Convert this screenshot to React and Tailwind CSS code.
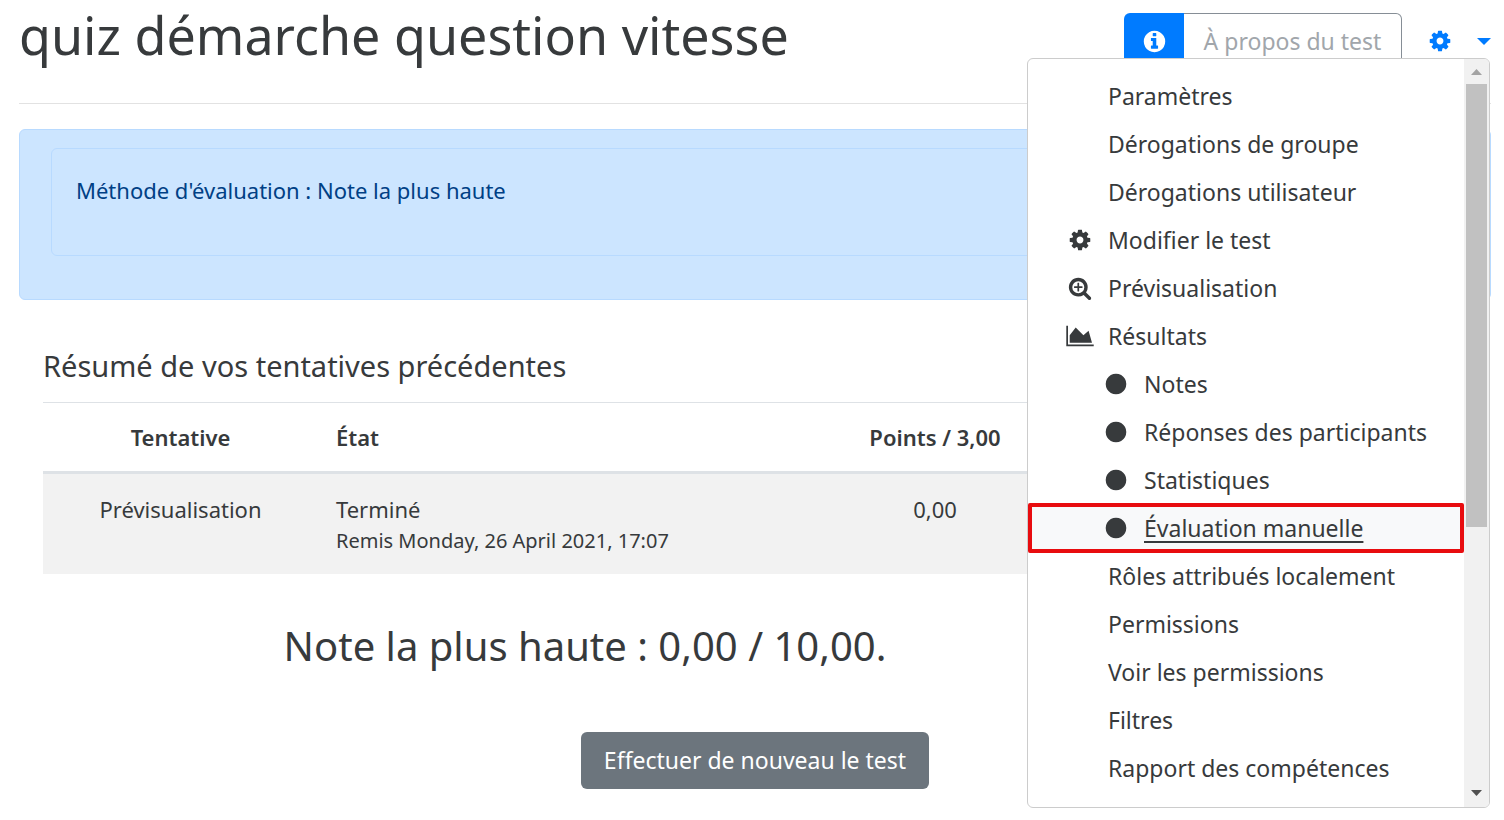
const PATHS = {
  cog: ["0 0 1792 1792", "M1152 896q0-106-75-181t-181-75-181 75-75 181 75 181 181 75 181-75 75-181zm512-109v222q0 12-8 23t-20 13l-185 28q-19 54-39 91 35 50 107 138 10 12 10 25t-9 23q-27 37-99 108t-94 71q-12 0-26-9l-138-108q-44 23-91 38-16 136-29 186-7 28-36 28h-222q-14 0-24.5-8.5t-11.5-21.5l-28-184q-49-16-90-37l-141 107q-10 9-25 9-14 0-25-11-126-114-165-168-7-10-7-23 0-12 8-23 15-21 51-66.5t54-70.5q-27-50-41-99l-183-27q-13-2-21-12.5t-8-23.5v-222q0-12 8-23t19-13l186-28q14-46 39-92-40-57-107-138-10-12-10-24 0-10 9-23 26-36 98.5-107.5t94.5-71.5q13 0 26 10l138 107q44-23 91-38 16-136 29-186 7-28 36-28h222q14 0 24.5 8.5t11.5 21.5l28 184q49 16 90 37l142-107q9-9 24-9 13 0 25 10 129 119 165 170 7 8 7 22 0 12-8 23-15 21-51 66.5t-54 70.5q26 50 41 98l183 28q13 2 21 12.5t8 23.5z"],
  info: ["0 0 1792 1792", "M1152 1376v-160q0-14-9-23t-23-9h-96v-512q0-14-9-23t-23-9h-320q-14 0-23 9t-9 23v160q0 14 9 23t23 9h96v320h-96q-14 0-23 9t-9 23v160q0 14 9 23t23 9h448q14 0 23-9t9-23zm-128-896v-160q0-14-9-23t-23-9h-192q-14 0-23 9t-9 23v160q0 14 9 23t23 9h192q14 0 23-9t9-23zm640 416q0 209-103 385.5t-279.5 279.5-385.5 103-385.5-103-279.5-279.5-103-385.5 103-385.5 279.5-279.5 385.5-103 385.5 103 279.5 279.5 103 385.5z"],
  zoom: ["0 0 1792 1792", "M1088 800v64q0 13-9.5 22.5t-22.5 9.5h-224v224q0 13-9.5 22.5t-22.5 9.5h-64q-13 0-22.5-9.5t-9.5-22.5v-224h-224q-13 0-22.5-9.5t-9.5-22.5v-64q0-13 9.5-22.5t22.5-9.5h224v-224q0-13 9.5-22.5t22.5-9.5h64q13 0 22.5 9.5t9.5 22.5v224h224q13 0 22.5 9.5t9.5 22.5zm128 32q0-185-131.5-316.5t-316.5-131.5-316.5 131.5-131.5 316.5 131.5 316.5 316.5 131.5 316.5-131.5 131.5-316.5zm512 832q0 53-37.5 90.5t-90.5 37.5q-54 0-90-38l-343-342q-179 124-399 124-143 0-273.5-55.5t-225-150-150-225-55.5-273.5 55.5-273.5 150-225 225-150 273.5-55.5 273.5 55.5 225 150 150 225 55.5 273.5q0 220-124 399l343 343q37 37 37 90z"],
  chart: ["0 0 2048 1792", "M2048 1536v128h-2048v-1536h128v1408h1920zm-384-1024l256 896h-1664v-576l448-576 576 576z"],
  circle: ["0 0 1792 1792", "M1664 896q0 209-103 385.5t-279.5 279.5-385.5 103-385.5-103-279.5-279.5-103-385.5 103-385.5 279.5-279.5 385.5-103 385.5 103 279.5 279.5 103 385.5z"],
};

function Icon({ name, className }) {
  const [viewBox, d] = PATHS[name];
  return (
    <svg viewBox={viewBox} className={className} fill="currentColor" aria-hidden="true">
      <path d={d} />
    </svg>
  );
}

const ITEMS = [
  { label: "Paramètres" },
  { label: "Dérogations de groupe" },
  { label: "Dérogations utilisateur" },
  { label: "Modifier le test", icon: "cog" },
  { label: "Prévisualisation", icon: "zoom" },
  { label: "Résultats", icon: "chart" },
  { label: "Notes", sub: true },
  { label: "Réponses des participants", sub: true },
  { label: "Statistiques", sub: true },
  { label: "Évaluation manuelle", sub: true, active: true },
  { label: "Rôles attribués localement" },
  { label: "Permissions" },
  { label: "Voir les permissions" },
  { label: "Filtres" },
  { label: "Rapport des compétences" },
];

function MenuItem({ label, icon, sub, active }) {
  return (
    <li>
      <a
        href="#"
        className={
          active
            ? "-my-px flex h-[50px] items-center rounded-xs border-4 border-[#e80c0f] bg-[#f8f9fa] pl-[68px] underline decoration-2 underline-offset-4"
            : sub
              ? "flex h-12 items-center pl-[72px]"
              : "flex h-12 items-center pl-9"
        }
      >
        <span className={sub ? "flex w-11 shrink-0 pl-1" : "flex w-11 shrink-0 pl-px"}>
          {sub && <Icon name="circle" className="h-6 w-6" />}
          {icon && (
            <span className="flex w-[30px] justify-center">
              <Icon name={icon} className={icon === "chart" ? "h-6 w-7" : "h-6 w-6"} />
            </span>
          )}
        </span>
        <span className="whitespace-nowrap">{label}</span>
      </a>
    </li>
  );
}

function ActionsMenu() {
  return (
    <nav
      aria-label="Actions du test"
      className="absolute top-[58px] right-[14px] flex h-[750px] w-[463px] overflow-hidden rounded-md border border-[#cccccc] bg-white text-[23px]"
    >
      <ul className="min-w-0 flex-1 pt-[13px]">
        {ITEMS.map((item) => (
          <MenuItem key={item.label} {...item} />
        ))}
      </ul>
      <div className="flex w-[25px] shrink-0 flex-col items-center bg-[#f1f1f1]" aria-hidden="true">
        <svg viewBox="0 0 25 25" className="h-[25px] w-[25px] shrink-0">
          <path d="M7 16h11l-5.500-6z" fill="#a3a3a3" />
        </svg>
        <div className="h-[443px] w-[21px] shrink-0 bg-[#c1c1c1]" />
        <div className="flex-1" />
        <svg viewBox="0 0 25 25" className="h-[25px] w-[25px] shrink-0">
          <path d="M7 8h11l-5.500 6z" fill="#505050" />
        </svg>
      </div>
    </nav>
  );
}

export default function App() {
  return (
    <div className="relative min-h-[820px] bg-white pr-[13px] pl-[19px] font-['Noto_Sans',sans-serif] text-[#373a3c]">
      <header className="flex h-[104px] items-start justify-between border-b border-[#e2e2e2]">
        <h1 className="pt-[3px] text-[52px] leading-[64px] whitespace-nowrap">quiz démarche question vitesse</h1>
        <div className="flex items-start pt-[13px]">
          <div className="flex h-14">
            <button type="button" aria-label="Informations" className="flex w-[60px] items-center justify-center rounded-l-md bg-[#007bff] text-white">
              <Icon name="info" className="h-[25px] w-[25px]" />
            </button>
            <button type="button" className="w-[218px] rounded-r-md border border-l-0 border-[#868e96] text-[23px] whitespace-nowrap text-[#a1a6ab]">
              À propos du test
            </button>
          </div>
          <button type="button" aria-label="Menu d'actions" className="ml-[26px] flex h-14 items-center gap-[25px] text-[#007bff]">
            <Icon name="cog" className="h-6 w-6" />
            <svg viewBox="0 0 14 7" className="h-[7px] w-[14px]" fill="currentColor" aria-hidden="true">
              <path d="M0 0h14l-7 7z" />
            </svg>
          </button>
        </div>
      </header>

      <section className="mt-[25px] h-[171px] rounded-md border border-[#b8daff] bg-[#cce5ff] px-[31px] pt-[18px] text-[#004085]">
        <div className="h-[108px] rounded-md border border-[#b8daff] px-6 pt-[23px] text-[22px] leading-9">
          Méthode d'évaluation : Note la plus haute
        </div>
      </section>

      <main className="px-6">
        <h2 className="pt-[44px] pb-[14px] text-[29px] leading-[44px]">Résumé de vos tentatives précédentes</h2>
        <table className="w-full table-fixed text-[22px] leading-9">
          <colgroup>
            <col className="w-[275px]" />
            <col className="w-[535px]" />
            <col className="w-[164px]" />
            <col />
          </colgroup>
          <thead>
            <tr className="border-t border-b-3 border-t-[#dee2e6] border-b-[#dee2e6]">
              <th scope="col" className="px-[18px] py-4 text-center font-semibold">Tentative</th>
              <th scope="col" className="px-[18px] py-4 text-left font-semibold">État</th>
              <th scope="col" className="py-4 text-center font-semibold whitespace-nowrap">Points / 3,00</th>
              <td />
            </tr>
          </thead>
          <tbody>
            <tr className="bg-[#f2f2f2] align-top">
              <td className="px-[18px] py-[17px] text-center">Prévisualisation</td>
              <td className="px-[18px] pt-[17px] pb-[19px]">
                Terminé
                <span className="block text-[20px] leading-[28px]">Remis Monday, 26 April 2021, 17:07</span>
              </td>
              <td className="py-[17px] text-center">0,00</td>
              <td />
            </tr>
          </tbody>
        </table>
        <h3 className="mt-[42px] pr-[340px] text-center text-[40px] leading-[60px]">Note la plus haute : 0,00 / 10,00.</h3>
        <div className="mt-14 flex justify-center">
          <button type="button" className="h-[57px] w-[348px] rounded-md bg-[#6c757d] text-[23px] whitespace-nowrap text-white">
            Effectuer de nouveau le test
          </button>
        </div>
      </main>

      <ActionsMenu />
    </div>
  );
}
